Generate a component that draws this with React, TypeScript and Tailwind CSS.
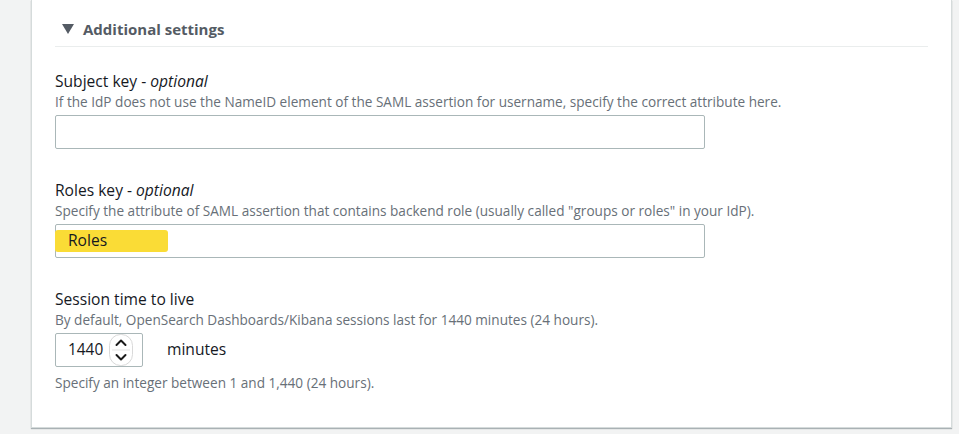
import React from "react";

function Spinner() {
  return (
    <svg width="24" height="32" viewBox="0 0 24 32" className="block">
      <rect x="0.5" y="0.5" width="23" height="31" rx="11" fill="#ffffff" stroke="#d9d9d9" />
      <line x1="3" y1="16" x2="21" y2="16" stroke="#e3e3e3" strokeWidth="1" />
      <path d="M7.5 11 L12 6.5 L16.5 11" fill="none" stroke="#1a1a1a" strokeWidth="2" strokeLinecap="round" strokeLinejoin="round" />
      <path d="M7.5 21 L12 25.5 L16.5 21" fill="none" stroke="#1a1a1a" strokeWidth="2" strokeLinecap="round" strokeLinejoin="round" />
    </svg>
  );
}

function Field({
  label,
  optional,
  desc,
  children,
}: {
  label: string;
  optional?: boolean;
  desc: string;
  children: React.ReactNode;
}) {
  return (
    <div className="flex flex-col">
      <div className="text-[15.6px] leading-[20px] text-[#16191f]">
        {label}
        {optional && (
          <>
            {" - "}
            <span className="italic">optional</span>
          </>
        )}
      </div>
      <div className="mt-[3px] text-[13.6px] leading-[16px] text-[#687078]">{desc}</div>
      <div className="mt-[5px]">{children}</div>
    </div>
  );
}

export default function App() {
  return (
    <div
      className="w-[959px] h-[434px] bg-[#f2f3f3] overflow-hidden pl-[31px] pr-[7px]"
      style={{ fontFamily: '"Open Sans", "Noto Sans", sans-serif' }}
    >
      <div className="h-[428px] bg-white border-x border-b border-[#d5dbdb] shadow-[0_1px_1px_rgba(0,28,36,0.3)] px-[23px]">
        <div className="h-[47px] pt-[17px] border-b border-[#eaeded]">
          <div className="flex items-center h-[24px] pl-[7px]">
            <svg width="12" height="10" viewBox="0 0 12 10" className="mr-[9px]">
              <path d="M0 0 H12 L6 10 Z" fill="#545b64" />
            </svg>
            <span className="text-[15px] font-bold text-[#545b64]">Additional settings</span>
          </div>
        </div>

        <div className="pt-[24px] flex flex-col gap-[31px]">
          <Field
            label="Subject key"
            optional
            desc="If the IdP does not use the NameID element of the SAML assertion for username, specify the correct attribute here."
          >
            <div className="w-[650px] h-[34px] border border-[#aab7b8] rounded-[2px] bg-white" />
          </Field>

          <Field
            label="Roles key"
            optional
            desc={'Specify the attribute of SAML assertion that contains backend role (usually called "groups or roles" in your IdP).'}
          >
            <div className="relative w-[650px] h-[34px] border border-[#aab7b8] rounded-[2px] bg-white">
              <div className="absolute left-[-1px] top-[5px] w-[113px] h-[22px] rounded-[3px] bg-[#fadc36]" />
              <span className="absolute left-[12px] top-0 h-[32px] flex items-center text-[15.6px] text-[#16191f]">
                Roles
              </span>
            </div>
          </Field>

          <div className="flex flex-col">
            <Field
              label="Session time to live"
              desc="By default, OpenSearch Dashboards/Kibana sessions last for 1440 minutes (24 hours)."
            >
              <div className="flex items-center">
                <div className="w-[88px] h-[34px] border border-[#aab7b8] rounded-[2px] bg-white flex items-center pl-[12px]">
                  <span className="text-[15.4px] text-[#16191f] w-[41px]">1440</span>
                  <Spinner />
                </div>
                <span className="ml-[24px] text-[15.6px] text-[#16191f]">minutes</span>
              </div>
            </Field>
            <div className="mt-[8px] text-[13.6px] leading-[16px] text-[#687078]">
              Specify an integer between 1 and 1,440 (24 hours).
            </div>
          </div>
        </div>
      </div>
    </div>
  );
}
